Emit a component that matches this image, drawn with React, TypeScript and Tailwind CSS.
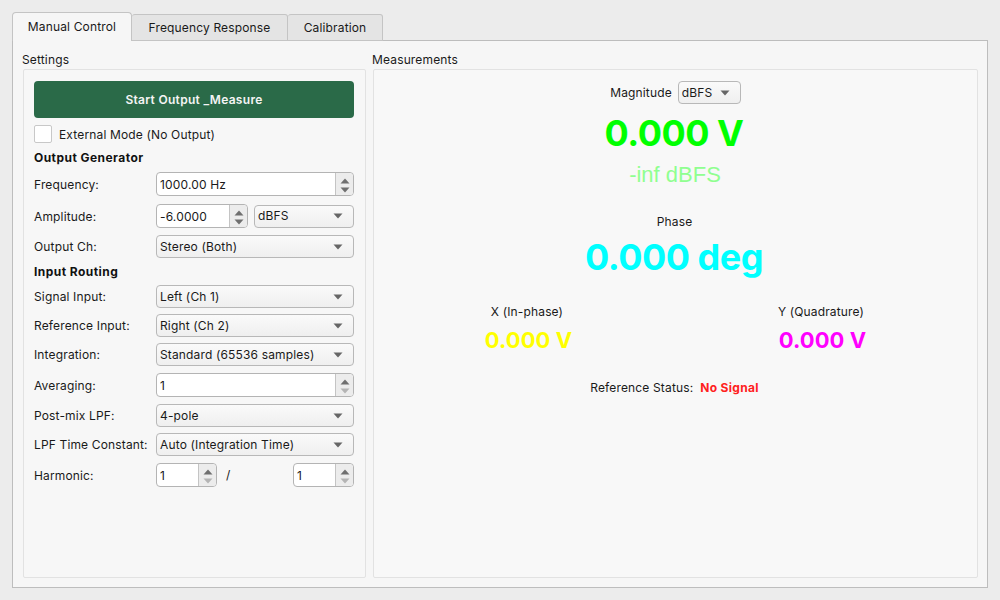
const font = { fontFamily: "Inter, 'Liberation Sans', sans-serif" };

function Spin({ dim }: { dim?: boolean }) {
  return (
    <div className="flex h-[24px] w-[18px] flex-col items-center justify-center gap-[3px] rounded-r-[4px] border-l border-[#c4c4c4] bg-[#ececec]">
      <svg width="10" height="6" viewBox="0 0 10 6">
        <path d="M5 0.5 L9.5 5.5 H0.5 Z" fill="#6f6f6f" />
      </svg>
      <svg width="10" height="6" viewBox="0 0 10 6">
        <path d="M0.5 0.5 H9.5 L5 5.5 Z" fill={dim ? "#b4b4b4" : "#6f6f6f"} />
      </svg>
    </div>
  );
}

function SpinBox({ value, className, dim }: { value: string; className: string; dim?: boolean }) {
  return (
    <div className={`flex h-[24px] items-stretch overflow-hidden rounded-[4px] border border-[#b4b4b4] bg-white ${className}`}>
      <div className="flex min-w-0 flex-1 items-center pl-[3px] pt-px text-[12px] text-[#1a1a1a]">{value}</div>
      <Spin dim={dim} />
    </div>
  );
}

function Select({ value, className }: { value: string; className: string }) {
  return (
    <div className={`flex h-[23px] items-center justify-between rounded-[4px] border border-[#b8b8b8] bg-gradient-to-b from-[#fafafa] to-[#efefef] pl-[3px] pr-[10px] text-[12px] text-[#1a1a1a] ${className}`}>
      <span>{value}</span>
      <svg width="10" height="6" viewBox="0 0 10 6">
        <path d="M0.5 0.5 H9.5 L5 5.5 Z" fill="#666666" />
      </svg>
    </div>
  );
}

function Row({ label, className, spin, children }: { label: string; className: string; spin?: boolean; children: React.ReactNode }) {
  return (
    <div className={`flex items-center ${className}`}>
      <div className={`w-[122px] shrink-0 text-[12px] text-[#1a1a1a] ${spin ? "pt-[2px]" : ""}`}>{label}</div>
      {children}
    </div>
  );
}

export default function App() {
  return (
    <div className="flex h-[600px] w-[1000px] flex-col overflow-hidden bg-[#ececec] pl-[12px] pr-[12px] pt-[12px] tracking-[0.15px]" style={font}>
      <div className="relative z-10 flex h-[29px] items-end text-[12px] text-[#1a1a1a]">
        <div className="flex h-[29px] w-[120px] items-center justify-center rounded-t-[4px] border border-b-0 border-[#c4c4c4] bg-[#f6f6f6]">
          Manual Control
        </div>
        <div className="flex h-[27px] w-[156px] items-center justify-center rounded-t-[3px] border border-l-0 border-[#c4c4c4] bg-[#e4e4e4]">
          Frequency Response
        </div>
        <div className="flex h-[27px] w-[95px] items-center justify-center rounded-t-[3px] border border-l-0 border-[#c4c4c4] bg-[#e4e4e4]">
          Calibration
        </div>
      </div>

      <div className="-mt-px flex h-[548px] gap-[7px] border border-[#bdbdbd] bg-[#f6f6f6] pl-[10px] pr-[9px] pt-[10px]">
        <div className="flex w-[343px] flex-col">
          <div className="-ml-px h-[18px] pt-px text-[12px] leading-[16px] text-[#1a1a1a]">Settings</div>
          <div className="flex h-[509px] flex-col rounded-[2px] border border-[#e2e2e2] bg-[#f7f7f7] pl-[10px] pr-[11px] pt-[11px]">
            <div className="flex h-[37px] items-center justify-center rounded-[4px] bg-[#2a6a48] text-[12px] font-semibold tracking-[0.3px] text-[#f4f4f4]">
              Start Output _Measure
            </div>
            <div className="mt-[7px] flex h-[18px] items-center gap-[7px] text-[12px] text-[#1a1a1a]">
              <div className="h-[18px] w-[18px] rounded-[2px] border border-[#c8c8c8] bg-white" />
              <span className="pt-[2px]">External Mode (No Output)</span>
            </div>
            <div className="mt-[7px] h-[16px] text-[12px] font-bold leading-[16px] tracking-[0.45px] text-[#111111]">Output Generator</div>
            <Row label="Frequency:" className="mt-[6px]" spin>
              <SpinBox value="1000.00 Hz" className="w-[198px]" />
            </Row>
            <Row label="Amplitude:" className="mt-[8px]" spin>
              <SpinBox value="-6.0000" className="w-[92px]" />
              <Select value="dBFS" className="ml-[6px] w-[100px]" />
            </Row>
            <Row label="Output Ch:" className="mt-[7px]">
              <Select value="Stereo (Both)" className="w-[198px]" />
            </Row>
            <div className="mt-[6px] h-[16px] text-[12px] font-bold leading-[16px] tracking-[0.45px] text-[#111111]">Input Routing</div>
            <Row label="Signal Input:" className="mt-[5px]">
              <Select value="Left (Ch 1)" className="w-[198px]" />
            </Row>
            <Row label="Reference Input:" className="mt-[6px]">
              <Select value="Right (Ch 2)" className="w-[198px]" />
            </Row>
            <Row label="Integration:" className="mt-[6px]">
              <Select value="Standard (65536 samples)" className="w-[198px]" />
            </Row>
            <Row label="Averaging:" className="mt-[7px]" spin>
              <SpinBox value="1" className="w-[198px]" dim />
            </Row>
            <Row label="Post-mix LPF:" className="mt-[7px]">
              <Select value="4-pole" className="w-[198px]" />
            </Row>
            <Row label="LPF Time Constant:" className="mt-[6px]">
              <Select value="Auto (Integration Time)" className="w-[198px]" />
            </Row>
            <Row label="Harmonic:" className="mt-[7px]" spin>
              <SpinBox value="1" className="w-[61px]" dim />
              <div className="ml-[9px] flex-1 text-[12px] text-[#1a1a1a]">/</div>
              <SpinBox value="1" className="w-[61px]" dim />
            </Row>
          </div>
        </div>

        <div className="flex w-[606px] flex-col">
          <div className="-ml-px h-[18px] pt-px text-[12px] leading-[16px] text-[#1a1a1a]">Measurements</div>
          <div className="flex h-[509px] flex-col items-center rounded-[2px] border border-[#e2e2e2] bg-[#f8f8f8] pt-[11px]">
            <div className="flex h-[23px] items-center gap-[6px] text-[12px] text-[#1a1a1a]">
              Magnitude
              <Select value="dBFS" className="w-[63px]" />
            </div>
            <div className="mt-[7px] h-[44px] pr-[3px] text-[36px] font-bold leading-[44px] tracking-[-0.5px] text-[#00ff00]">0.000 V</div>
            <div className="mt-[6px] h-[28px] pr-[1px] text-[22px] leading-[28px] tracking-normal text-[#90ff90]" style={{ fontFamily: "'Liberation Sans', sans-serif" }}>-inf dBFS</div>
            <div className="mt-[25px] h-[16px] pr-[2px] text-[12px] leading-[16px] text-[#1a1a1a]">Phase</div>
            <div className="mt-[5px] h-[44px] pr-[3px] text-[36px] font-bold leading-[44px] tracking-[-0.5px] text-[#00ffff]">0.000 deg</div>
            <div className="mt-[25px] grid w-full grid-cols-2 pl-[6px] pr-[9px]">
              <div className="flex flex-col items-center">
                <div className="h-[16px] text-[12px] leading-[16px] text-[#1a1a1a]">X (In-phase)</div>
                <div className="mt-[5px] h-[30px] pl-[3px] text-[22px] font-bold leading-[30px] tracking-[0.1px] text-[#ffff00]">0.000 V</div>
              </div>
              <div className="flex flex-col items-center">
                <div className="h-[16px] text-[12px] leading-[16px] text-[#1a1a1a]">Y (Quadrature)</div>
                <div className="mt-[5px] h-[30px] pl-[3px] text-[22px] font-bold leading-[30px] tracking-[0.1px] text-[#ff00ff]">0.000 V</div>
              </div>
            </div>
            <div className="mt-[25px] flex h-[16px] items-center gap-[7px] pr-[2px] text-[12px] text-[#1a1a1a]">
              Reference Status:
              <span className="font-bold tracking-[0.3px] text-[#ff2020]">No Signal</span>
            </div>
          </div>
        </div>
      </div>
    </div>
  );
}
